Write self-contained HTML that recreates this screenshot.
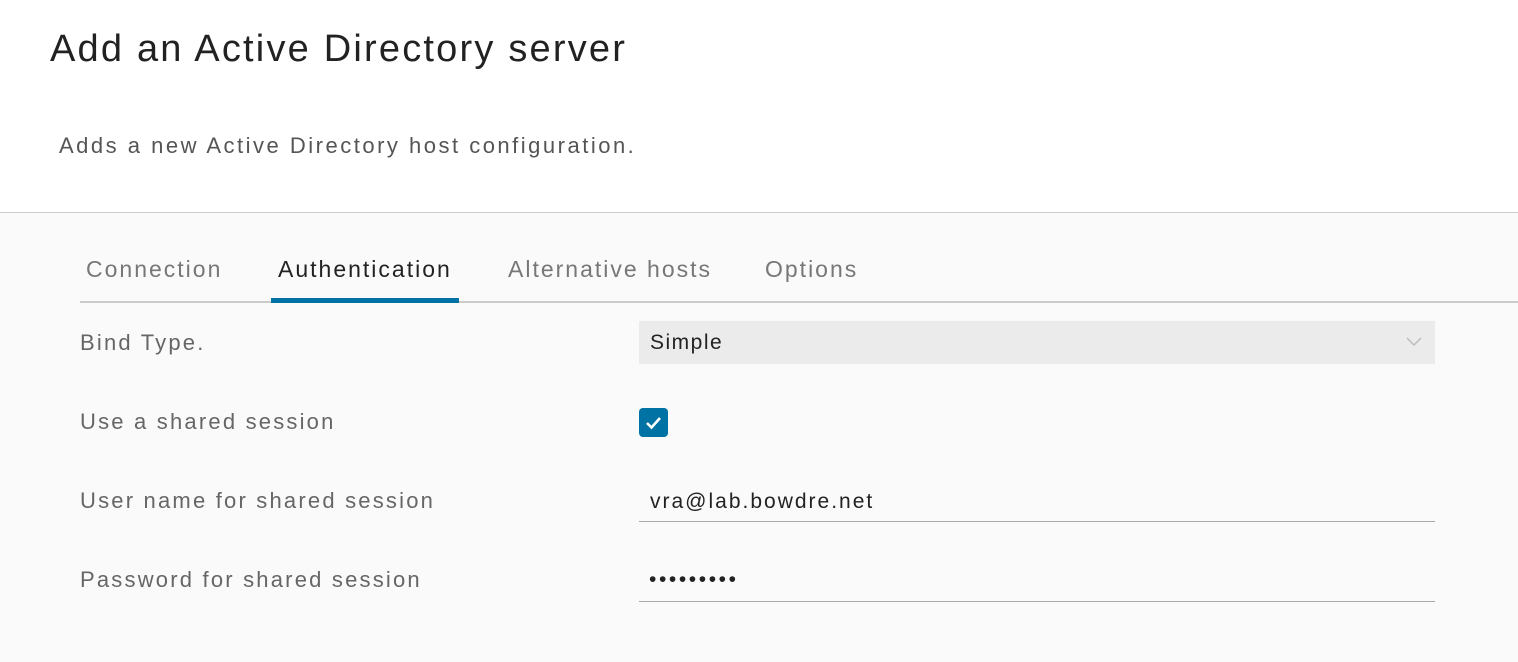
<!DOCTYPE html><html><head><style>
body{margin:0;width:1518px;height:662px;overflow:hidden;font-family:"Liberation Sans",sans-serif;background:#fafafa;position:relative}
.top{position:absolute;left:0;top:0;width:1518px;height:212px;background:#fff;border-bottom:1px solid #ccc}
.a{position:absolute;white-space:nowrap}
.lbl{font-size:22px;color:#666;left:80px;letter-spacing:2.2px}
.tab{font-size:23px;color:#777;top:256px;letter-spacing:2px}
</style></head><body>
<div class="top"></div>
<div class="a" style="left:50px;top:28px;font-size:38px;color:#222;letter-spacing:2.2px">Add an Active Directory server</div>
<div class="a" style="left:59px;top:133px;font-size:22px;color:#555;letter-spacing:2.5px">Adds a new Active Directory host configuration.</div>
<div class="a tab" style="left:86px">Connection</div>
<div class="a tab" style="left:278px;color:#222">Authentication</div>
<div class="a tab" style="left:508px">Alternative hosts</div>
<div class="a tab" style="left:765px">Options</div>
<div class="a" style="left:80px;top:301px;width:1438px;height:2px;background:#ccc"></div>
<div class="a" style="left:271px;top:298px;width:188px;height:5px;background:#0072a3"></div>
<div class="a lbl" style="top:330px">Bind Type.</div>
<div class="a lbl" style="top:409px">Use a shared session</div>
<div class="a lbl" style="top:488px">User name for shared session</div>
<div class="a lbl" style="top:567px">Password for shared session</div>
<div class="a" style="left:639px;top:321px;width:796px;height:43px;background:#ebebeb"></div>
<div class="a" style="left:650px;top:331px;font-size:21px;color:#222;letter-spacing:1.5px">Simple</div>
<svg class="a" style="left:1405px;top:336px" width="18" height="12"><path d="M2 2L9 9L16 2" fill="none" stroke="#bbb" stroke-width="1.5"/></svg>
<div class="a" style="left:639px;top:408px;width:29px;height:29px;background:#0072a3;border-radius:4px"></div>
<svg class="a" style="left:639px;top:408px" width="29" height="29"><path d="M8 15L12.5 19.5L21 10" fill="none" stroke="#fff" stroke-width="2.6"/></svg>
<div class="a" style="left:650px;top:490px;font-size:21px;color:#222;letter-spacing:2px">vra@lab.bowdre.net</div>
<div class="a" style="left:639px;top:521px;width:796px;height:1px;background:#aaa"></div>
<div class="a" style="left:649px;top:568px;font-size:21px;color:#222;letter-spacing:2.6px">•••••••••</div>
<div class="a" style="left:639px;top:601px;width:796px;height:1px;background:#aaa"></div>
</body></html>
